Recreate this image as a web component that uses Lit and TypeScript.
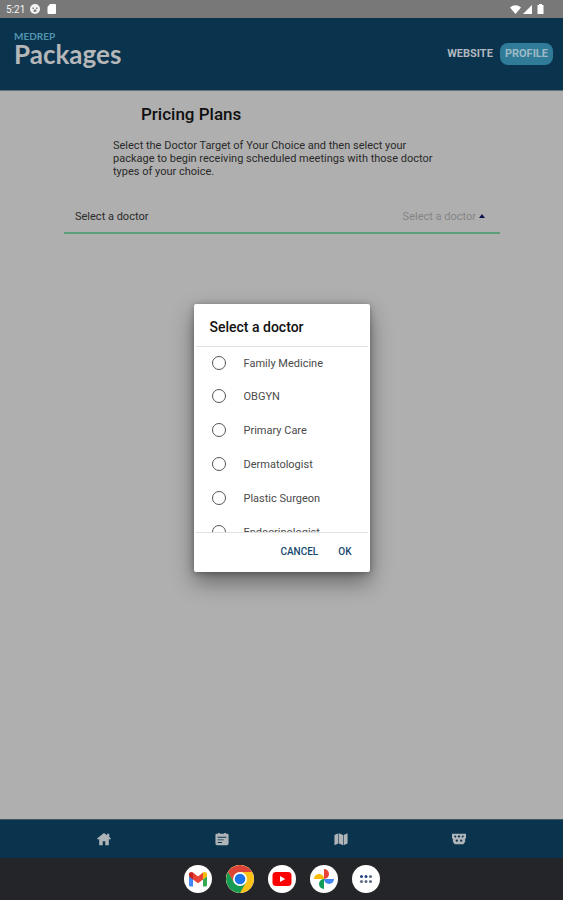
import { LitElement, html, css, svg } from "lit";
import { customElement, state } from "lit/decorators.js";

const doctors = [
  "Family Medicine",
  "OBGYN",
  "Primary Care",
  "Dermatologist",
  "Plastic Surgeon",
  "Endocrinologist",
];

const tabs = [
  {
    label: "Home",
    icon: svg`<path d="M8 1 0 7.500l1.200 1.300L2.500 7.800V15h4v-4.500h3V15h4V7.800l1.300 1L16 7.500l-2-1.700V2h-2.500v1.800z"/>`,
  },
  {
    label: "Calendar",
    icon: svg`<path fill-rule="evenodd" d="M3.500 1h2v1h5V1h2v1h1.500A1.500 1.500 0 0 1 15.500 3.500v9.700a1.800 1.800 0 0 1-1.800 1.800H2.300A1.800 1.800 0 0 1 .5 13.200V3.500A1.500 1.500 0 0 1 2 2h1.500zM3 5.500v1h10v-1zm0 3v1h7v-1zm0 3v1h5v-1z"/>`,
  },
  {
    label: "Map",
    icon: svg`<path d="M.5 3.500 5 1.500v11.500l-4.500 2zM5.700 1.500l4.600 2V15l-4.600-2zM11 3.500l4.500-2v11.500l-4.500 2z"/>`,
  },
  {
    label: "Tickets",
    icon: svg`<path fill-rule="evenodd" d="M0 2h16v5l-1 1v3l-2 3H3l-2-3V8L0 7zM3 4l-.5 1L4 6.500l1-1L4 4zm4 0-.500 1.500 1.500 1 1.500-1L9 4zm5 0-1 1.500 1 1 1.500-1.500L13 4zM5 8.500l-1 1.500 1.500 1.500L7 10l-1-1.500zm5 0L9 10l1.500 1.500L12 10l-1-1.500z"/>`,
  },
];

const apps = [
  {
    label: "Gmail",
    icon: svg`<path fill="#4285f4" d="M5 21V11l4 3v7.500H6.500A1.500 1.500 0 0 1 5 20z"/><path fill="#34a853" d="M19 21.500V14l4-3v9a1.500 1.500 0 0 1-1.500 1.500z"/><path fill="#c5221f" d="M5 11.500V9.200c0-2.200 2.300-2.900 4-1.700v7z"/><path fill="#ea4335" d="M9 14.500v-7l5 3.900 5-3.900v7l-5 3.800z"/><path fill="#fbbc04" d="M19 14.500v-7c1.700-1.200 4-.5 4 1.700v2.300z"/>`,
  },
  {
    label: "Chrome",
    icon: svg`<circle cx="14" cy="14" r="14" fill="#fbc116"/><path fill="#db4437" d="M14 7h12.100A14 14 0 0 0 1.900 7L8 17.500z"/><path fill="#169b55" d="M1.900 7A14 14 0 0 0 14 28l6-10.500-6 3.500-6-3.500z"/><circle cx="14" cy="14" r="7" fill="#fff"/><circle cx="14" cy="14" r="5.300" fill="#1a73e8"/>`,
  },
  {
    label: "YouTube",
    icon: svg`<rect x="4.500" y="7" width="19" height="14" rx="3.500" fill="#f00"/><path fill="#fff" d="m12 11 5.200 3-5.200 3z"/>`,
  },
  {
    label: "Photos",
    icon: svg`<path fill="#ea4335" d="M14 4a5 5 0 0 1 0 10z"/><path fill="#4285f4" d="M24 14a5 5 0 0 1-10 0z"/><path fill="#0f9d58" d="M14 24a5 5 0 0 1 0-10z"/><path fill="#fbbc04" d="M4 14a5 5 0 0 1 10 0z"/>`,
  },
  {
    label: "All apps",
    icon: svg`<g fill="#26417f"><circle cx="9.500" cy="11.500" r="1.500"/><circle cx="14" cy="11.500" r="1.500"/></g><g fill="#5f6a86"><circle cx="18.500" cy="11.500" r="1.500"/><circle cx="9.500" cy="16.500" r="1.500"/><circle cx="14" cy="16.500" r="1.500"/><circle cx="18.500" cy="16.500" r="1.500"/></g>`,
  },
];

@customElement("app-root")
export class AppRoot extends LitElement {
  @state() private choice = "";

  static styles = css`
    :host {
      display: flex;
      flex-direction: column;
      min-height: 100vh;
      background: #afafaf;
      color: #2a2a2a;
      font-family: Roboto, "Liberation Sans", sans-serif;
      font-size: 11px;
    }
    * {
      box-sizing: border-box;
    }
    button,
    select {
      font: inherit;
      border: 0;
      background: none;
      padding: 0;
      margin: 0;
    }
    svg {
      display: block;
    }
    .status {
      display: flex;
      align-items: center;
      height: 18px;
      padding: 0 18px 0 6px;
      gap: 5px;
      background: #787878;
      color: #f4f4f4;
      font-size: 10px;
    }
    .signals {
      display: flex;
      align-items: center;
      gap: 2px;
      margin-left: auto;
    }
    .screen {
      position: relative;
      flex: 1;
      display: flex;
      flex-direction: column;
    }
    .header {
      display: flex;
      align-items: center;
      justify-content: space-between;
      height: 73px;
      padding: 0 10px 0 14px;
      background: #0a334e;
      border-bottom: 1px solid #61727f;
    }
    .brand {
      font-family: Lato, sans-serif;
      font-weight: 700;
      color: #b5b7b9;
      margin-bottom: 10px;
    }
    .brand-top {
      display: block;
      font-size: 10px;
      line-height: 10px;
      color: #5295ae;
    }
    .brand-name {
      display: block;
      font-size: 26px;
      line-height: 26px;
    }
    .links {
      display: flex;
      align-items: center;
      gap: 7px;
      font-size: 11px;
      font-weight: 700;
      line-height: 22px;
    }
    .links a {
      color: #b0b8bf;
      text-decoration: none;
    }
    .links .profile {
      padding: 0 5px;
      border-radius: 8px;
      background: #2f7b98;
      color: #9dbac6;
    }
    .content {
      flex: 1;
      padding: 12px 63px 0 64px;
    }
    .title {
      margin: 0 0 14px 77px;
      font-size: 17px;
      line-height: 22px;
      font-weight: 500;
      color: #101010;
    }
    .intro {
      margin: 0 49px;
      max-width: 332px;
      line-height: 13px;
    }
    .field {
      display: flex;
      align-items: center;
      justify-content: space-between;
      height: 34px;
      margin-top: 22px;
      padding: 0 15px 0 11px;
      border-bottom: 2px solid #5d9f78;
    }
    .picker {
      display: flex;
      align-items: center;
      gap: 3px;
    }
    .picker select {
      appearance: none;
      color: #858585;
      text-align: right;
    }
    .tabs {
      display: flex;
      height: 39px;
      padding: 0 45px;
      background: #0a334e;
      border-top: 1px solid #3f5667;
    }
    .tabs a {
      flex: 1;
      display: flex;
      align-items: center;
      justify-content: center;
    }
    .tabs svg {
      fill: #aeb4b8;
    }
    .dock {
      display: flex;
      align-items: center;
      justify-content: center;
      gap: 14px;
      height: 42px;
      background: #242529;
    }
    .dock button {
      border-radius: 50%;
      background: #fff;
      overflow: hidden;
    }
    .overlay {
      position: absolute;
      inset: 0;
      display: flex;
      align-items: center;
      justify-content: center;
    }
    .dialog {
      width: 176px;
      border-radius: 2px;
      background: #fff;
      box-shadow: 0 10px 22px rgba(0, 0, 0, 0.42), 0 1px 6px rgba(0, 0, 0, 0.3);
    }
    .dialog-title {
      margin: 0;
      padding: 12px 16px 8px;
      font-size: 14px;
      line-height: 22px;
      font-weight: 500;
      color: #111;
    }
    .options {
      height: 187px;
      margin: 0 2px;
      overflow: hidden;
      border: solid #e2e2e2;
      border-width: 1px 0;
    }
    .option {
      display: flex;
      align-items: center;
      gap: 18px;
      height: 34px;
      padding-left: 16px;
      color: #4a4a4a;
    }
    .option:first-child {
      height: 32px;
    }
    .option input {
      appearance: none;
      width: 14px;
      height: 14px;
      margin: 0;
      border: 1px solid #555;
      border-radius: 50%;
    }
    .option input:checked {
      border: 4px solid #174a70;
    }
    .actions {
      display: flex;
      justify-content: flex-end;
      gap: 20px;
      padding: 8px 18px 9px;
    }
    .actions button {
      line-height: 22px;
      font-size: 10px;
      font-weight: 500;
      color: #174a70;
    }
  `;

  render() {
    return html`
      <div class="status">
        <span>5:21</span>
        <svg width="10" height="10" viewBox="0 0 10 10">
          <circle cx="5" cy="5" r="5" fill="#f4f4f4" />
          <path d="M2.500 3.500h1.500v1.500H2.500zM6 3.500h1.500v1.500H6zM3 7l2-2 2 2-2 1z" fill="#787878" />
        </svg>
        <svg width="12" height="10" viewBox="0 0 12 10">
          <path d="M5 0h5a1 1 0 0 1 1 1v8a1 1 0 0 1-1 1H3.500a1 1 0 0 1-1-1V3z" fill="#fff" />
        </svg>
        <div class="signals">
          <svg width="11" height="9" viewBox="0 0 11 9">
            <path d="M0 2.500a8 8 0 0 1 11 0L5.500 9z" fill="#fff" />
          </svg>
          <svg width="9" height="9" viewBox="0 0 9 9"><path d="M9 0v9H0z" fill="#fff" /></svg>
          <svg width="11" height="10" viewBox="0 0 11 10">
            <path d="M5 0h3v1h1.500v9h-6V1H5z" fill="#fff" />
          </svg>
        </div>
      </div>
      <div class="screen">
        <header class="header">
          <div class="brand">
            <span class="brand-top">MEDREP</span>
            <span class="brand-name">Packages</span>
          </div>
          <nav class="links">
            <a href="#website">WEBSITE</a>
            <a class="profile" href="#profile">PROFILE</a>
          </nav>
        </header>
        <main class="content">
          <h1 class="title">Pricing Plans</h1>
          <p class="intro">
            Select the Doctor Target of Your Choice and then select your package to begin receiving
            scheduled meetings with those doctor types of your choice.
          </p>
          <div class="field">
            <label for="doctor">Select a doctor</label>
            <div class="picker">
              <select id="doctor">
                <option>Select a doctor</option>
              </select>
              <svg width="6" height="4" viewBox="0 0 6 4"><path d="M3 0l3 4H0z" fill="#0c1250" /></svg>
            </div>
          </div>
        </main>
        <nav class="tabs">
          ${tabs.map(
            (tab) => html`<a href="#${tab.label.toLowerCase()}" aria-label=${tab.label}>
              <svg width="14" height="14" viewBox="0 0 16 16">${tab.icon}</svg>
            </a>`
          )}
        </nav>
        <div class="overlay">
          <div class="dialog" role="dialog" aria-labelledby="dialog-title">
            <h2 class="dialog-title" id="dialog-title">Select a doctor</h2>
            <div class="options" role="radiogroup" aria-labelledby="dialog-title">
              ${doctors.map(
                (name) => html`<label class="option">
                  <input
                    type="radio"
                    name="doctor"
                    .checked=${this.choice === name}
                    @change=${() => (this.choice = name)}
                  />
                  <span>${name}</span>
                </label>`
              )}
            </div>
            <div class="actions">
              <button type="button">CANCEL</button>
              <button type="button">OK</button>
            </div>
          </div>
        </div>
      </div>
      <div class="dock">
        ${apps.map(
          (app) => html`<button type="button" aria-label=${app.label}>
            <svg width="28" height="28" viewBox="0 0 28 28">${app.icon}</svg>
          </button>`
        )}
      </div>
    `;
  }
}
